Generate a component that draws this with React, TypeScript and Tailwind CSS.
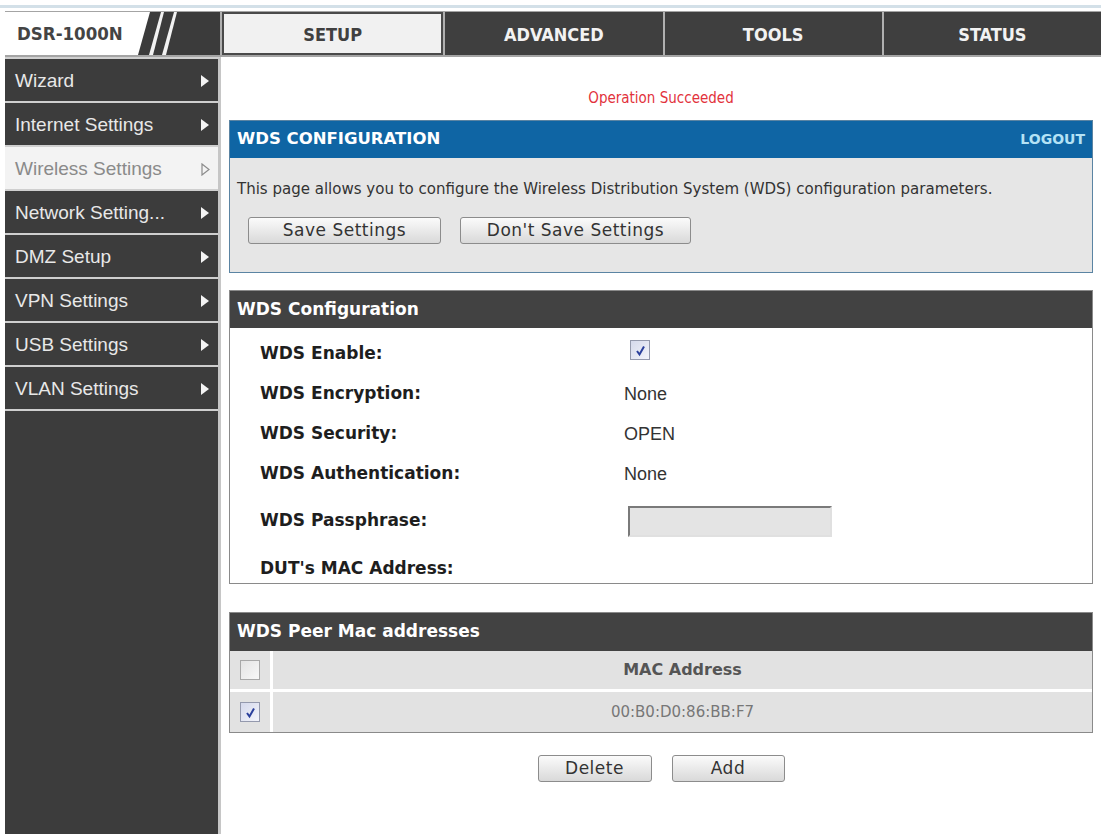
import React from "react";

// D-Link DSR-1000N router admin: Setup > Wireless Settings > WDS
const tahoma = "font-['DejaVu_Sans_Condensed','DejaVu_Sans',sans-serif]";
const arial = "font-['Liberation_Sans',Arial,sans-serif]";
const verdana = "font-['DejaVu_Sans',Verdana,sans-serif]";

const menu = [
  { label: "Wizard" },
  { label: "Internet Settings" },
  { label: "Wireless Settings", active: true },
  { label: "Network Setting..." },
  { label: "DMZ Setup" },
  { label: "VPN Settings" },
  { label: "USB Settings" },
  { label: "VLAN Settings" },
];

const tabs = ["SETUP", "ADVANCED", "TOOLS", "STATUS"];

function Arrow({ active }: { active?: boolean }) {
  return active ? (
    <svg width="9" height="13" viewBox="0 0 9 13">
      <polygon points="1,1 8,6.5 1,12" fill="none" stroke="#8c8c8c" strokeWidth="1.2" />
    </svg>
  ) : (
    <svg width="8" height="12" viewBox="0 0 8 12">
      <polygon points="0,0 8,6 0,12" fill="#f4f4f4" />
    </svg>
  );
}

function Check({ checked, faded }: { checked?: boolean; faded?: boolean }) {
  return (
    <div
      className={
        faded
          ? "w-[20px] h-[20px] border border-[#a8a8a8] bg-gradient-to-br from-[#e4e4e4] to-[#f8f8f8] flex items-center justify-center"
          : "w-[20px] h-[20px] border border-[#9499ad] bg-gradient-to-br from-[#d5d9ec] to-[#f3f4fa] flex items-center justify-center"
      }
    >
      {checked && (
        <svg width="13" height="13" viewBox="0 0 13 13">
          <path d="M3 7 L5.5 10.5 L10 2.5" fill="none" stroke="#2a3f9c" strokeWidth="2" />
        </svg>
      )}
    </div>
  );
}

function Button({ label, w }: { label: string; w: string }) {
  return (
    <button
      className={`${w} h-[27px] rounded-[3px] border border-[#8c8c8c] bg-gradient-to-b from-[#fbfbfb] to-[#d9d9d9] text-[#333] text-[17px] leading-none tracking-[0.5px] ${verdana}`}
    >
      {label}
    </button>
  );
}

const rows = [
  { label: "WDS Enable:", value: "check" },
  { label: "WDS Encryption:", value: "None" },
  { label: "WDS Security:", value: "OPEN" },
  { label: "WDS Authentication:", value: "None" },
];

export default function App() {
  return (
    <div className="w-[1101px] h-[834px] bg-white overflow-hidden flex flex-col">
      <div className="h-[5px] shrink-0" />
      <div className="h-[3px] shrink-0 bg-[#d3e0e8]" />
      <div className="h-[3px] shrink-0" />

      {/* header */}
      <div className="ml-[5px] h-[46px] shrink-0 flex gap-[2px] bg-[#b0b0b0] border-t border-b-2 border-[#a4a4a4]">
        <div className="w-[215px] flex">
          <div className={`w-[133px] bg-white flex items-center pl-[12px] text-[#444] font-bold text-[18.5px] ${tahoma}`}>
            DSR-1000N
          </div>
          <svg width="82" height="43" viewBox="0 0 82 43" className="bg-[#3b3b3b]">
            <polygon points="0,0 12,0 0,43" fill="#ffffff" />
            <polygon points="23,0 26,0 15,43 11,43" fill="#f2f2f2" />
            <polygon points="36,0 39,0 28,43 24,43" fill="#f2f2f2" />
          </svg>
        </div>
        <div className="flex-1 flex gap-[2px]">
          {tabs.map((t, i) =>
            i === 0 ? (
              <div
                key={t}
                className={`flex-1 bg-[#f1f1f1] border-2 border-[#4a4a4a] flex items-center justify-center pt-[2px] text-[#404040] font-bold text-[18px] ${tahoma}`}
              >
                {t}
              </div>
            ) : (
              <div
                key={t}
                className={`flex-1 bg-[#3f3f3f] flex items-center justify-center pt-[2px] text-[#f2f2f2] font-bold text-[18px] ${tahoma}`}
              >
                {t}
              </div>
            )
          )}
        </div>
      </div>

      <div className="flex-1 flex">
        {/* sidebar */}
        <div className="ml-[5px] w-[216px] bg-[#3c3c3c] border-t-2 border-t-[#cfcfcf] border-r-[3px] border-r-[#c6c6c6] flex flex-col">
          {menu.map((m) => (
            <div
              key={m.label}
              className={
                m.active
                  ? `h-[44px] border-b-2 border-[#cfcfcf] bg-[#f3f3f3] flex items-center justify-between pt-[2px] pl-[10px] pr-[8px] text-[19px] text-[#8a8a8a] ${arial}`
                  : `h-[44px] border-b-2 border-[#cfcfcf] flex items-center justify-between pt-[2px] pl-[10px] pr-[9px] text-[19px] text-[#e8e8e8] ${arial}`
              }
            >
              <span>{m.label}</span>
              <Arrow active={m.active} />
            </div>
          ))}
        </div>

        {/* main */}
        <div className="ml-[8px] w-[864px] flex flex-col">
          <div className={`pt-[31px] pb-[12px] h-[63px] text-center text-[#e2323c] text-[15px] leading-[20px] ${tahoma}`}>
            Operation Succeeded
          </div>

          {/* WDS CONFIGURATION panel */}
          <div className="border border-[#5b84a3]">
            <div className="h-[37px] bg-[#0f65a4] flex items-center justify-between px-[7px]">
              <span className={`text-white font-bold text-[16.5px] ${verdana}`}>WDS CONFIGURATION</span>
              <span className={`text-[#b4e2f5] font-bold text-[14px] ${verdana}`}>LOGOUT</span>
            </div>
            <div className="h-[114px] bg-[#e6e6e6] pl-[7px] pt-[20px]">
              <p className={`text-[16.7px] leading-[20px] text-[#333] ${tahoma}`}>
                This page allows you to configure the Wireless Distribution System (WDS) configuration parameters.
              </p>
              <div className="mt-[19px] ml-[11px] flex gap-[19px]">
                <Button label="Save Settings" w="w-[193px]" />
                <Button label="Don't Save Settings" w="w-[231px]" />
              </div>
            </div>
          </div>

          {/* WDS Configuration panel */}
          <div className="mt-[17px] border border-[#8a8a8a]">
            <div className="h-[37px] bg-[#424242] flex items-center px-[7px]">
              <span className={`text-white font-bold text-[17px] ${verdana}`}>WDS Configuration</span>
            </div>
            <div className="pt-[6px] pl-[30px]">
              {rows.map((r) => (
                <div key={r.label} className="h-[40px] flex items-center">
                  <span className={`w-[364px] font-bold text-[17px] text-[#1e1e1e] ${verdana}`}>{r.label}</span>
                  {r.value === "check" ? (
                    <div className="ml-[6px] -mt-[8px]">
                      <Check checked />
                    </div>
                  ) : (
                    <span className={`text-[18px] text-[#333] ${arial}`}>{r.value}</span>
                  )}
                </div>
              ))}
              <div className="h-[54px] flex items-center">
                <span className={`w-[364px] font-bold text-[17px] text-[#1e1e1e] ${verdana}`}>WDS Passphrase:</span>
                <div className="ml-[4px] w-[204px] h-[31px] bg-[#e4e4e4] border-2 border-t-[#7a7a7a] border-l-[#7a7a7a] border-r-[#e0e0e0] border-b-[#e0e0e0]" />
              </div>
              <div className="h-[35px] flex items-end pb-[2px]">
                <span className={`font-bold text-[17px] text-[#1e1e1e] ${verdana}`}>DUT's MAC Address:</span>
              </div>
            </div>
          </div>

          {/* WDS Peer Mac addresses panel */}
          <div className="mt-[28px] border border-[#8a8a8a]">
            <div className="h-[38px] bg-[#424242] flex items-center px-[7px]">
              <span className={`text-white font-bold text-[17px] ${verdana}`}>WDS Peer Mac addresses</span>
            </div>
            <div className="flex bg-[#e2e2e2] h-[41px] border-b-[3px] border-white">
              <div className="w-[43px] border-r-[3px] border-white flex items-center justify-center">
                <Check faded />
              </div>
              <div className={`flex-1 flex items-center justify-center font-bold text-[16px] text-[#555] ${verdana}`}>
                MAC Address
              </div>
            </div>
            <div className="flex bg-[#e2e2e2] h-[40px]">
              <div className="w-[43px] border-r-[3px] border-white flex items-center justify-center">
                <Check checked />
              </div>
              <div className={`flex-1 flex items-center justify-center text-[15px] text-[#777] ${verdana}`}>
                00:B0:D0:86:BB:F7
              </div>
            </div>
          </div>

          <div className="mt-[22px] flex justify-center gap-[20px]">
            <Button label="Delete" w="w-[114px]" />
            <Button label="Add" w="w-[113px]" />
          </div>
        </div>
      </div>
    </div>
  );
}
